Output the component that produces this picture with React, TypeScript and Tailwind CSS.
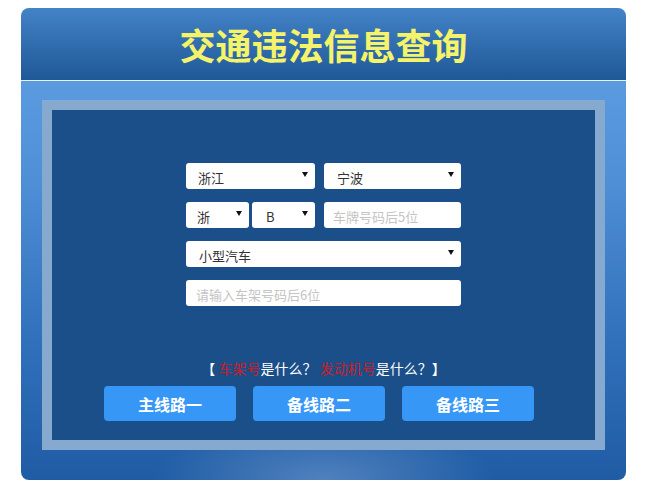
import React from "react";

const font = { fontFamily: '"Noto Sans CJK SC", "Noto Sans", sans-serif' };

function Arrow() {
  return (
    <svg width="6" height="5" viewBox="0 0 6 5" className="shrink-0">
      <path d="M0 0 L6 0 L3 5 Z" fill="#111" />
    </svg>
  );
}

function SelectBox({ label, w, pl }: { label: string; w: string; pl: string }) {
  return (
    <div className={`${w} h-[26px] bg-white rounded-[3px] flex items-center justify-between pr-[7px] ${pl}`}>
      <span className="text-[13px] text-[#333] leading-none pt-[3px]">{label}</span>
      <div className="-mt-[3px]">
        <Arrow />
      </div>
    </div>
  );
}

function InputBox({ ph, w, pl }: { ph: string; w: string; pl: string }) {
  return (
    <div className={`${w} h-[26px] bg-white rounded-[3px] flex items-center ${pl}`}>
      <span className="text-[13px] text-[#c4c4c4] leading-none pt-[2px]">{ph}</span>
    </div>
  );
}

export default function App() {
  return (
    <div className="w-[652px] h-[500px] bg-white pt-[8px] pl-[21px]" style={font}>
      <div className="w-[605px] h-[472px] rounded-[8px] overflow-hidden flex flex-col">
        <div className="h-[73px] shrink-0 bg-gradient-to-b from-[#4383c7] to-[#1f5897] border-b border-[#e8f2fc] flex items-center justify-center">
          <h1 className="text-[36px] font-bold text-[#f4f36a] leading-none">交通违法信息查询</h1>
        </div>
        <div
          className="flex-1 pt-[19px] pl-[21px] pr-[21px]"
          style={{
            background:
              "radial-gradient(ellipse 170px 60px at 50% 100%, rgba(120,160,210,0.55), rgba(120,160,210,0) 100%), linear-gradient(to bottom, #5a9be0 0%, #4f8fd6 25%, #3170bb 65%, #1f5ca4 100%)",
          }}
        >
          <div className="h-[350px] border-[10px] border-[rgba(200,225,250,0.62)] bg-[#1b4f8a] flex flex-col">
            <div className="w-[275px] mx-auto mt-[53px] flex flex-col gap-[13px]">
              <div className="flex gap-[9px]">
                <SelectBox label="浙江" w="w-[129px]" pl="pl-[12px]" />
                <SelectBox label="宁波" w="w-[137px]" pl="pl-[13px]" />
              </div>
              <div className="flex gap-[3px]">
                <SelectBox label="浙" w="w-[63px]" pl="pl-[11px]" />
                <SelectBox label="B" w="w-[63px]" pl="pl-[14px]" />
                <div className="ml-[6px]">
                  <InputBox ph="车牌号码后5位" w="w-[137px]" pl="pl-[9px]" />
                </div>
              </div>
              <SelectBox label="小型汽车" w="w-[275px]" pl="pl-[13px]" />
              <InputBox ph="请输入车架号码后6位" w="w-[275px]" pl="pl-[10px]" />
            </div>
            <div className="mt-[52px] text-center text-[14px] leading-[20px] text-white">
              【 <span className="text-[#c81e2a]">车架号</span>是什么？ <span className="text-[#c81e2a]">发动机号</span>是什么？】
            </div>
            <div className="mt-[8px] pl-[52px] flex gap-[17px]">
              {["主线路一", "备线路二", "备线路三"].map((t) => (
                <div
                  key={t}
                  className="w-[132px] h-[35px] rounded-[4px] bg-[#3797f6] text-white font-bold text-[16px] flex items-center justify-center"
                >
                  {t}
                </div>
              ))}
            </div>
          </div>
        </div>
      </div>
    </div>
  );
}
